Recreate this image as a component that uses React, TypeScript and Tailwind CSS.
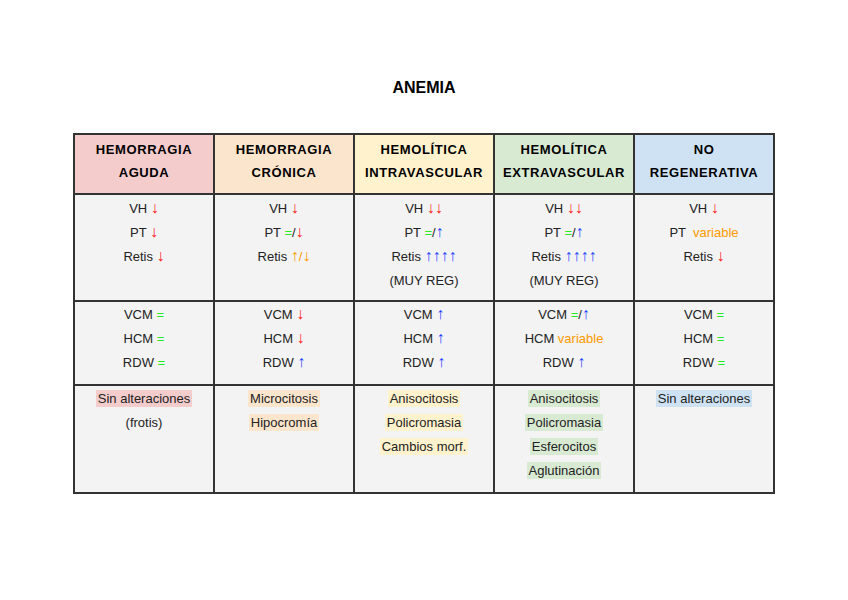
import React from "react";

// arrows are drawn a bit larger than the text, as in the sheet export
const R = ({ children }: { children: React.ReactNode }) => (
  <span className="text-[#ff2020] text-[16px] leading-none">{children}</span>
);
const G = ({ children }: { children: React.ReactNode }) => (
  <span className="text-[#22ee22]">{children}</span>
);
const B = ({ children }: { children: React.ReactNode }) => (
  <span className="text-[#2244ff] text-[16px] leading-none">{children}</span>
);
const O = ({ children }: { children: React.ReactNode }) => (
  <span className="text-[#ff9900]">{children}</span>
);
const OA = ({ children }: { children: React.ReactNode }) => (
  <span className="text-[#ff9900] text-[16px] leading-none">{children}</span>
);

const Mark = ({ bg, children }: { bg: string; children: React.ReactNode }) => (
  <span className={`${bg} px-[2px] py-[1px]`}>{children}</span>
);

const headers = [
  { bg: "bg-[#f4cccc]", lines: ["HEMORRAGIA", "AGUDA"] },
  { bg: "bg-[#fce5cd]", lines: ["HEMORRAGIA", "CRÓNICA"] },
  { bg: "bg-[#fff2cc]", lines: ["HEMOLÍTICA", "INTRAVASCULAR"] },
  { bg: "bg-[#d9ead3]", lines: ["HEMOLÍTICA", "EXTRAVASCULAR"] },
  { bg: "bg-[#cfe2f3]", lines: ["NO", "REGENERATIVA"] },
];

const row1: React.ReactNode[][] = [
  [<>VH <R>↓</R></>, <>PT <R>↓</R></>, <>Retis <R>↓</R></>],
  [<>VH <R>↓</R></>, <>PT <G>=</G>/<R>↓</R></>, <>Retis <OA>↑</OA><O>/</O><OA>↓</OA></>],
  [<>VH <R>↓↓</R></>, <>PT <G>=</G>/<B>↑</B></>, <>Retis <B>↑↑↑↑</B></>, <>(MUY REG)</>],
  [<>VH <R>↓↓</R></>, <>PT <G>=</G>/<B>↑</B></>, <>Retis <B>↑↑↑↑</B></>, <>(MUY REG)</>],
  [<>VH <R>↓</R></>, <>PT  <O>variable</O></>, <>Retis <R>↓</R></>],
];

const row2: React.ReactNode[][] = [
  [<>VCM <G>=</G></>, <>HCM <G>=</G></>, <>RDW <G>=</G></>],
  [<>VCM <R>↓</R></>, <>HCM <R>↓</R></>, <>RDW <B>↑</B></>],
  [<>VCM <B>↑</B></>, <>HCM <B>↑</B></>, <>RDW <B>↑</B></>],
  [<>VCM <G>=</G>/<B>↑</B></>, <>HCM <O>variable</O></>, <>RDW <B>↑</B></>],
  [<>VCM <G>=</G></>, <>HCM <G>=</G></>, <>RDW <G>=</G></>],
];

const row3: React.ReactNode[][] = [
  [<Mark bg="bg-[#f4cccc]">Sin alteraciones</Mark>, <>(frotis)</>],
  [<Mark bg="bg-[#fce5cd]">Microcitosis</Mark>, <Mark bg="bg-[#fce5cd]">Hipocromía</Mark>],
  [
    <Mark bg="bg-[#fff2cc]">Anisocitosis</Mark>,
    <Mark bg="bg-[#fff2cc]">Policromasia</Mark>,
    <Mark bg="bg-[#fff2cc]">Cambios morf.</Mark>,
  ],
  [
    <Mark bg="bg-[#d9ead3]">Anisocitosis</Mark>,
    <Mark bg="bg-[#d9ead3]">Policromasia</Mark>,
    <Mark bg="bg-[#d9ead3]">Esferocitos</Mark>,
    <Mark bg="bg-[#d9ead3]">Aglutinación</Mark>,
  ],
  [<Mark bg="bg-[#cfe2f3]">Sin alteraciones</Mark>],
];

function BodyRow({ cells, height, pad }: { cells: React.ReactNode[][]; height: string; pad: string }) {
  return (
    <>
      {cells.map((lines, i) => (
        <div key={i} className={`bg-[#f3f3f3] ${height} ${pad} flex flex-col items-center`}>
          {lines.map((l, j) => (
            <div key={j} className="whitespace-pre h-[24px] leading-[24px]">
              {l}
            </div>
          ))}
        </div>
      ))}
    </>
  );
}

export default function App() {
  return (
    <div
      className="w-[848px] h-[600px] bg-white text-[13px] text-[#222] pt-[76px]"
      style={{ fontFamily: '"Liberation Sans", Arial, sans-serif' }}
    >
      <h1 className="text-center text-[16px] leading-[24px] font-bold text-black">ANEMIA</h1>

      <div className="mt-[33px] mx-auto w-[702px] grid grid-cols-[repeat(5,138px)] gap-[2px] p-[2px] bg-[#333]">
        {/* Header */}
        {headers.map((h) => (
          <div
            key={h.lines[1]}
            className={`${h.bg} h-[58px] pt-[3px] flex flex-col items-center font-bold tracking-[0.6px] text-black`}
          >
            {h.lines.map((l) => (
              <div key={l} className="leading-[23px]">
                {l}
              </div>
            ))}
          </div>
        ))}

        {/* Hemograma */}
        <BodyRow cells={row1} height="h-[105px]" pad="pt-[2px]" />

        {/* Índices */}
        <BodyRow cells={row2} height="h-[82px]" pad="pt-[1px]" />

        {/* Frotis */}
        <BodyRow cells={row3} height="h-[106px]" pad="pt-[1px]" />
      </div>
    </div>
  );
}
